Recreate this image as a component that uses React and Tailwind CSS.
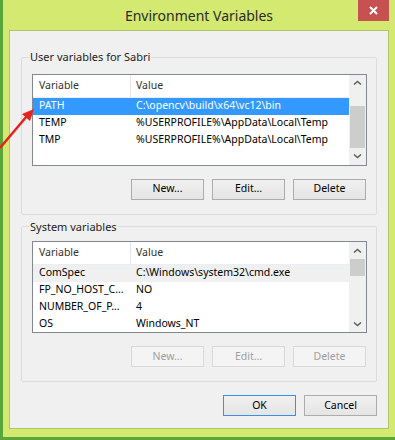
import React from "react";

const userRows = [
  { name: "PATH", value: "C:\\opencv\\build\\x64\\vc12\\bin", selected: true },
  { name: "TEMP", value: "%USERPROFILE%\\AppData\\Local\\Temp" },
  { name: "TMP", value: "%USERPROFILE%\\AppData\\Local\\Temp" },
];

const systemRows = [
  { name: "ComSpec", value: "C:\\Windows\\system32\\cmd.exe", focused: true },
  { name: "FP_NO_HOST_C…", value: "NO" },
  { name: "NUMBER_OF_P…", value: "4" },
  { name: "OS", value: "Windows_NT" },
];

const Chevron = ({ down }) => (
  <svg width="9" height="6" viewBox="0 0 9 6">
    <path
      d={down ? "M1 1.5 L4.5 4.5 L8 1.5" : "M1 4.5 L4.5 1.5 L8 4.5"}
      fill="none"
      stroke="#606060"
      strokeWidth="1.6"
    />
  </svg>
);

// the little vertical scroll bar on the right of each list
const ScrollBar = ({ thumbTop, thumbHeight }) => (
  <div className="w-[17px] bg-[#f0f0f0] flex flex-col">
    <div className="h-[17px] flex items-center justify-center">
      <Chevron />
    </div>
    <div className="flex-1 flex flex-col">
      <div style={{ height: thumbTop }} />
      <div className="mx-[1px] bg-[#cdcdcd]" style={{ height: thumbHeight }} />
    </div>
    <div className="h-[17px] flex items-center justify-center">
      <Chevron down />
    </div>
  </div>
);

const ListView = ({ rows, thumbTop, thumbHeight }) => (
  <div className="h-[92px] border border-[#828790] bg-white flex">
    <div className="flex-1 flex flex-col">
      <div className="h-[23px] flex items-center text-[#333] border-b border-[#e8eff8]">
        <div className="w-[98px] h-full flex items-center pl-[6px] border-r border-[#e5e5e5]">
          Variable
        </div>
        <div className="pl-[5px]">Value</div>
      </div>
      {rows.map((r) => (
        <div
          key={r.name}
          className={
            "h-[17px] flex items-center whitespace-nowrap " +
            (r.selected
              ? "bg-[#3399ff] text-white"
              : r.focused
              ? "bg-[#f0f0f0] text-black"
              : "text-black")
          }
        >
          <div className="w-[98px] pl-[6px]">{r.name}</div>
          <div className="pl-[5px]">{r.value}</div>
        </div>
      ))}
    </div>
    <ScrollBar thumbTop={thumbTop} thumbHeight={thumbHeight} />
  </div>
);

const Button = ({ children, disabled, focused }) => (
  <div
    className={
      "w-[73px] h-[21px] flex items-center justify-center border " +
      (disabled
        ? "border-[#d9d9d9] bg-[#f4f4f4] text-[#a0a0a0]"
        : focused
        ? "border-[#3c8fe6] bg-gradient-to-b from-[#f0f0f0] to-[#e5e5e5] text-black"
        : "border-[#acacac] bg-gradient-to-b from-[#f0f0f0] to-[#e5e5e5] text-black")
    }
  >
    {children}
  </div>
);

const App = () => {
  return (
    <div
      className="w-[395px] h-[440px] bg-[#5aa63a] relative overflow-hidden text-[10.5px]"
      style={{ fontFamily: '"Noto Sans", "Open Sans", sans-serif' }}
    >
      <div className="ml-[3px] h-[437px] bg-[#d4e96f] flex flex-col">
        {/* title bar */}
        <div className="h-[30px] flex items-start">
          <div className="flex-1 h-[30px] pl-[37px] flex items-center justify-center text-[14px] text-[#2b2b2b]">
            Environment Variables
          </div>
          <div className="w-[31px] h-[21px] mr-[6px] bg-[#c75050] flex items-center justify-center">
            <svg width="9" height="9" viewBox="0 0 9 9">
              <path d="M1 1 L8 8 M8 1 L1 8" stroke="white" strokeWidth="2" />
            </svg>
          </div>
        </div>

        {/* client area */}
        <div className="mx-[6px] h-[399px] border border-[#b4c46c] bg-[#f0f0f0] px-[11px] flex flex-col">
          <fieldset className="mt-[18px] border border-[#dcdcdc] rounded-[2px] pl-[10px] pr-[9px] pt-[8px] pb-[14px]">
            <legend className="-ml-[3px] px-[1px] text-[11px] text-[#1c1c1c]">User variables for Sabri</legend>
            <ListView rows={userRows} thumbTop={14} thumbHeight={42} />
            <div className="mt-[13px] flex justify-end gap-[8px] pr-[1px]">
              <Button>New...</Button>
              <Button>Edit...</Button>
              <Button>Delete</Button>
            </div>
          </fieldset>

          <fieldset className="mt-[4px] border border-[#dcdcdc] rounded-[2px] pl-[10px] pr-[9px] pt-[6px] pb-[14px]">
            <legend className="-ml-[3px] px-[1px] text-[11px] text-[#1c1c1c]">System variables</legend>
            <ListView rows={systemRows} thumbTop={0} thumbHeight={17} />
            <div className="mt-[13px] flex justify-end gap-[8px] pr-[1px]">
              <Button disabled>New...</Button>
              <Button disabled>Edit...</Button>
              <Button disabled>Delete</Button>
            </div>
          </fieldset>

          <div className="mt-[13px] flex justify-end gap-[8px]">
            <Button focused>OK</Button>
            <Button>Cancel</Button>
          </div>
        </div>
      </div>

      {/* red annotation arrow */}
      <svg className="absolute left-0 top-[100px]" width="40" height="56" viewBox="0 0 40 56">
        <path d="M0 48 L27 16" stroke="#e8231f" strokeWidth="2.5" />
        <path d="M34 9 L22 14 L30 21 Z" fill="#e8231f" />
      </svg>
    </div>
  );
};

export default App;
